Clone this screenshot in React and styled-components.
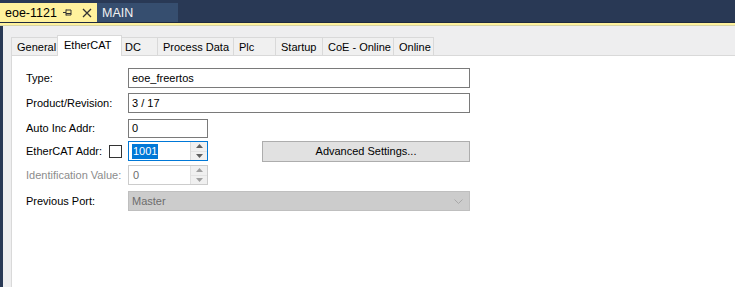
import React from "react";
import styled, { createGlobalStyle } from "styled-components";

const GlobalStyle = createGlobalStyle`
  html, body {
    margin: 0;
    padding: 0;
    background: #ffffff;
  }
  body {
    font-family: "Liberation Sans", Arial, sans-serif;
    font-size: 11px;
    color: #000;
    white-space: nowrap;
  }
`;

const Window = styled.div`
  width: 735px;
  height: 287px;
  display: flex;
  flex-direction: column;
  overflow: hidden;
  background: #eeeeef;
`;

const DocBar = styled.div`
  height: 22px;
  background: #293955;
  display: flex;
  align-items: flex-end;
  border-bottom: 1px solid #1e2a40;
`;

const DocTab = styled.div`
  height: 19px;
  width: ${props => props.width}px;
  box-sizing: border-box;
  padding-left: ${props => (props.active ? 5 : 5)}px;
  display: flex;
  align-items: center;
  font-size: 12.5px;
  background: ${props => (props.active ? "#fff29d" : "#364e6f")};
  color: ${props => (props.active ? "#000" : "#f2f2f2")};
`;

const DocName = styled.span`
  width: 58px;
  flex: 0 0 auto;
`;

const DocIcon = styled.svg`
  flex: 0 0 auto;
  margin-right: ${props => props.gap || 0}px;
`;

const AccentLine = styled.div`
  height: 2px;
  background: #fff29d;
  border-bottom: 1px solid #d8d4a8;
`;

const Body = styled.div`
  flex: 1;
  display: flex;
  border-left: 3px solid #293955;
`;

const Gutter = styled.div`
  width: 8px;
  background: #eeeeef;
`;

const Panel = styled.div`
  flex: 1;
  display: flex;
  flex-direction: column;
`;

const TabStrip = styled.div`
  height: 29px;
  display: flex;
  align-items: flex-end;
  border-bottom: 1px solid #d9d9d9;
`;

const Tab = styled.div`
  height: ${props => (props.selected ? 21 : 18)}px;
  box-sizing: border-box;
  width: ${props => props.width}px;
  padding-left: ${props => (props.selected ? 6 : 5)}px;
  padding-bottom: ${props => (props.selected ? 2 : 0)}px;
  display: flex;
  align-items: center;
  background: ${props => (props.selected ? "#ffffff" : "#f0f0f0")};
  border: 1px solid #d9d9d9;
  border-bottom: none;
  border-left: ${props => (props.first || props.selected ? "1px solid #d9d9d9" : "none")};
  margin-left: ${props => (props.selected ? -2 : 0)}px;
  margin-right: ${props => (props.selected ? -2 : 0)}px;
  margin-bottom: ${props => (props.selected ? -1 : 0)}px;
  position: relative;
  z-index: ${props => (props.selected ? 1 : 0)};
`;

const Content = styled.div`
  flex: 1;
  background: #ffffff;
  border-left: 1px solid #d9d9d9;
  padding: 12px 0 0 14px;
  display: flex;
  flex-direction: column;
`;

const Row = styled.div`
  height: 20px;
  display: flex;
  align-items: center;
  margin-top: ${props => props.top || 0}px;
`;

const Label = styled.div`
  width: ${props => props.width || 102}px;
  flex: 0 0 auto;
  color: ${props => (props.disabled ? "#8c8c8c" : "#000")};
`;

const TextBox = styled.div`
  width: ${props => props.width}px;
  height: ${props => props.height || 20}px;
  box-sizing: border-box;
  border: 1px solid ${props => (props.focused ? "#0078d7" : props.disabled ? "#cccccc" : "#7a7a7a")};
  background: #fff;
  display: flex;
  align-items: center;
  padding-left: 3px;
  color: ${props => (props.disabled ? "#6d6d6d" : "#000")};
`;

const SpinBox = styled(TextBox)`
  padding-left: 0;
  justify-content: space-between;
`;

const SpinValue = styled.span`
  margin-left: 3px;
  padding: 0 1px;
  line-height: 15px;
  background: ${props => (props.selected ? "#0078d7" : "transparent")};
  color: ${props => (props.selected ? "#fff" : "inherit")};
`;

const SpinButtons = styled.div`
  width: 17px;
  height: 100%;
  display: flex;
  flex-direction: column;
  border-left: 1px solid ${props => (props.disabled ? "#e0e0e0" : "#d9d9d9")};
  box-sizing: border-box;
`;

const SpinHalf = styled.div`
  flex: 1;
  display: flex;
  align-items: center;
  justify-content: center;
  background: #f0f0f0;
  border-bottom: ${props => (props.top ? "1px solid #e3e3e3" : "none")};
`;

const CheckBox = styled.div`
  width: 13px;
  height: 13px;
  box-sizing: border-box;
  border: 1px solid #333333;
  background: #fff;
  margin-right: 6px;
`;

const Button = styled.div`
  width: 208px;
  height: 21px;
  margin-left: 54px;
  box-sizing: border-box;
  border: 1px solid #adadad;
  background: #e1e1e1;
  display: flex;
  align-items: center;
  justify-content: center;
`;

const Combo = styled.div`
  width: 342px;
  height: 20px;
  box-sizing: border-box;
  border: 1px solid #bfbfbf;
  background: #cccccc;
  color: #6d6d6d;
  display: flex;
  align-items: center;
  justify-content: space-between;
  padding: 0 6px 0 3px;
`;

const Arrow = ({ up, color }) => (
  <svg width="7" height="4" viewBox="0 0 7 4">
    <path d={up ? "M0 4 L3.5 0 L7 4 Z" : "M0 0 L3.5 4 L7 0 Z"} fill={color} />
  </svg>
);

const Spinner = ({ value, width, focused, disabled, selected }) => (
  <SpinBox width={width} focused={focused} disabled={disabled}>
    <SpinValue selected={selected}>{value}</SpinValue>
    <SpinButtons disabled={disabled}>
      <SpinHalf top>
        <Arrow up color={disabled ? "#a0a0a0" : "#606060"} />
      </SpinHalf>
      <SpinHalf>
        <Arrow color={disabled ? "#a0a0a0" : "#606060"} />
      </SpinHalf>
    </SpinButtons>
  </SpinBox>
);

const tabs = [
  { name: "General", width: 48 },
  { name: "EtherCAT", width: 65, selected: true },
  { name: "DC", width: 38 },
  { name: "Process Data", width: 76 },
  { name: "Plc", width: 42 },
  { name: "Startup", width: 47 },
  { name: "CoE - Online", width: 71 },
  { name: "Online", width: 40 }
];

export default function App() {
  return (
    <>
      <GlobalStyle />
      <Window>
        <DocBar>
          <DocTab active width={97}>
            <DocName>eoe-1121</DocName>
            <DocIcon width="9" height="9" viewBox="0 0 9 9" gap={10}>
              <path d="M0 4.5 H3 M3 1.5 V7.5 M3 2 H8 V7 H3 M3 5.5 H8" stroke="#333" strokeWidth="1" fill="none" />
            </DocIcon>
            <DocIcon width="10" height="10" viewBox="0 0 10 10">
              <path d="M1 1 L9 9 M9 1 L1 9" stroke="#333" strokeWidth="1.3" />
            </DocIcon>
          </DocTab>
          <DocTab width={81}>MAIN</DocTab>
        </DocBar>
        <AccentLine />
        <Body>
          <Gutter />
          <Panel>
            <TabStrip>
              {tabs.map((t, i) => (
                <Tab key={t.name} width={t.width} selected={t.selected} first={i === 0}>
                  {t.name}
                </Tab>
              ))}
            </TabStrip>
            <Content>
              <Row>
                <Label>Type:</Label>
                <TextBox width={342}>eoe_freertos</TextBox>
              </Row>
              <Row top={5}>
                <Label>Product/Revision:</Label>
                <TextBox width={342}>3 / 17</TextBox>
              </Row>
              <Row top={5}>
                <Label>Auto Inc Addr:</Label>
                <TextBox width={80} height={19}>0</TextBox>
              </Row>
              <Row top={3}>
                <Label width={83}>EtherCAT Addr:</Label>
                <CheckBox />
                <Spinner value="1001" width={80} focused selected />
                <Button>Advanced Settings...</Button>
              </Row>
              <Row top={4}>
                <Label disabled>Identification Value:</Label>
                <Spinner value="0" width={80} disabled />
              </Row>
              <Row top={6}>
                <Label>Previous Port:</Label>
                <Combo>
                  Master
                  <svg width="9" height="5" viewBox="0 0 9 5">
                    <path d="M0.5 0.5 L4.5 4.5 L8.5 0.5" stroke="#a8a8a8" strokeWidth="1" fill="none" />
                  </svg>
                </Combo>
              </Row>
            </Content>
          </Panel>
        </Body>
      </Window>
    </>
  );
}
